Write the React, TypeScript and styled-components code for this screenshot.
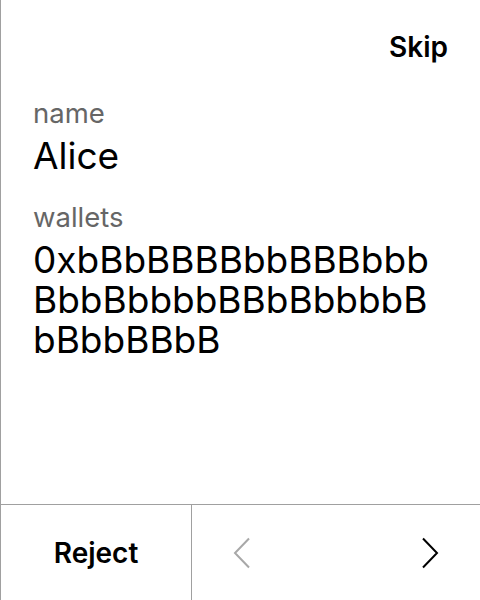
import React from "react";
import styled, { createGlobalStyle } from "styled-components";

const Global = createGlobalStyle`
  html, body { margin: 0; padding: 0; background: #fff; }
  body { font-family: Inter, "Noto Sans", sans-serif; color: #000; }
  * { box-sizing: border-box; }
`;

const Screen = styled.div`
  width: 480px;
  height: 600px;
  display: flex;
  flex-direction: column;
  border-left: 1px solid #a0a0a0;
  background: #fff;
`;

const Header = styled.div`
  display: flex;
  justify-content: flex-end;
  padding: 30px 32px 0 32px;
`;

const SkipButton = styled.button`
  border: none;
  background: none;
  padding: 0;
  font-family: inherit;
  font-size: 28px;
  font-weight: 600;
  line-height: 34px;
  color: #000;
  cursor: pointer;
`;

const Body = styled.div`
  flex: 1;
  display: flex;
  flex-direction: column;
  gap: 24px;
  padding: 32px 32px 0 32px;
`;

const Field = styled.div`
  display: flex;
  flex-direction: column;
  gap: 6px;
`;

const Label = styled.div`
  font-size: 27.5px;
  line-height: 34px;
  color: #666;
`;

const Value = styled.div`
  font-size: 37px;
  line-height: 40px;
  color: #000;
  word-break: break-all;
`;

const Footer = styled.div`
  height: 96px;
  display: flex;
  border-top: 1px solid #a0a0a0;
`;

const RejectButton = styled.button`
  width: 191px;
  border: none;
  border-right: 1px solid #a0a0a0;
  background: none;
  font-family: inherit;
  font-size: 28px;
  font-weight: 600;
  color: #000;
  cursor: pointer;
`;

const Nav = styled.div`
  flex: 1;
  display: flex;
  justify-content: space-between;
`;

const NavButton = styled.button<{ $disabled?: boolean }>`
  width: 100px;
  border: none;
  background: none;
  display: flex;
  align-items: center;
  justify-content: center;
  color: ${(p) => (p.$disabled ? "#a8a8a8" : "#000")};
  cursor: ${(p) => (p.$disabled ? "default" : "pointer")};
`;

const Chevron = ({ dir }: { dir: "left" | "right" }) => (
  <svg width="18" height="32" viewBox="0 0 18 32" fill="none">
    <path
      d={dir === "left" ? "M16 1.5 L2 16 L16 30.5" : "M2 1.5 L16 16 L2 30.5"}
      stroke="currentColor"
      strokeWidth="2"
    />
  </svg>
);

export default function App() {
  return (
    <>
      <Global />
      <Screen>
        <Header>
          <SkipButton>Skip</SkipButton>
        </Header>
        <Body>
          <Field>
            <Label>name</Label>
            <Value>Alice</Value>
          </Field>
          <Field>
            <Label>wallets</Label>
            <Value>0xbBbBBBBbbBBBbbbBbbBbbbbBBbBbbbbBbBbbBBbB</Value>
          </Field>
        </Body>
        <Footer>
          <RejectButton>Reject</RejectButton>
          <Nav>
            <NavButton $disabled>
              <Chevron dir="left" />
            </NavButton>
            <NavButton>
              <Chevron dir="right" />
            </NavButton>
          </Nav>
        </Footer>
      </Screen>
    </>
  );
}
